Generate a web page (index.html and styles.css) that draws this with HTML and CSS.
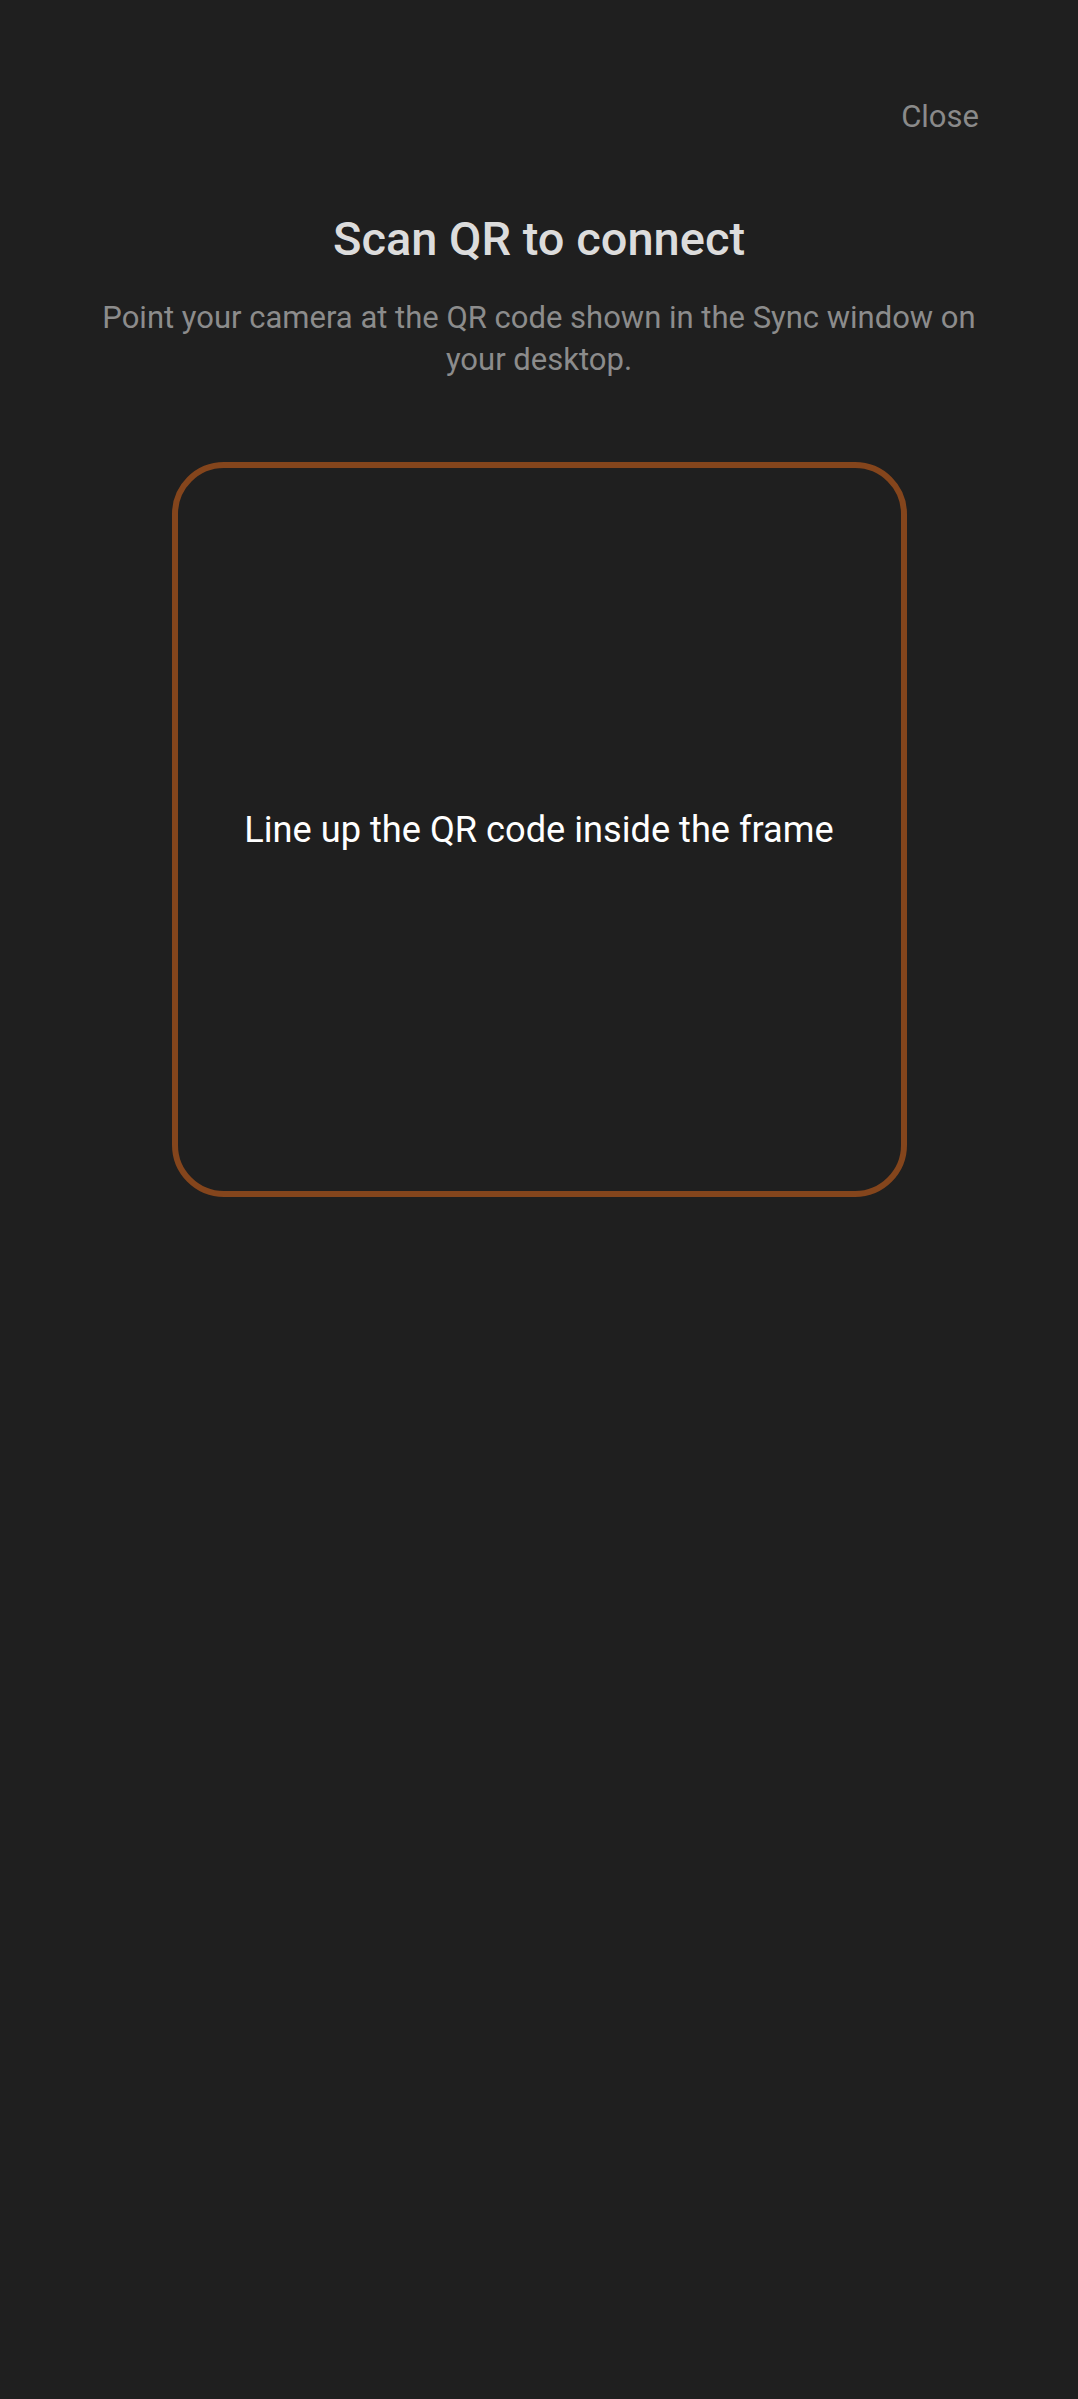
FILE: index.html
```html
<!DOCTYPE html>
<html lang="en">
<head>
<meta charset="utf-8">
<title>Scan QR to connect</title>
<link rel="stylesheet" href="styles.css">
</head>
<body>
<main class="screen">
  <header class="topbar">
    <button class="close-btn" type="button">Close</button>
  </header>
  <h1 class="title">Scan QR to connect</h1>
  <p class="subtitle">Point your camera at the QR code shown in the Sync window on your desktop.</p>
  <div class="frame">
    <span class="frame-hint">Line up the QR code inside the frame</span>
  </div>
</main>
</body>
</html>
```
FILE: styles.css
```css
html, body {
  margin: 0;
  padding: 0;
  background: #1f1f1f;
}
body {
  font-family: Roboto, "Noto Sans", "Liberation Sans", sans-serif;
  min-height: 2399px;
}
.screen {
  display: flex;
  flex-direction: column;
  align-items: center;
  padding: 97px 0 0;
}
.topbar {
  align-self: stretch;
  display: flex;
  justify-content: flex-end;
  padding: 0 99px;
}
.close-btn {
  background: none;
  border: 0;
  padding: 0;
  margin: 0;
  font-family: inherit;
  font-size: 31px;
  line-height: 40px;
  color: #8a8a8a;
}
.title {
  margin: 74px 0 0;
  font-size: 47px;
  line-height: 56px;
  font-weight: 500;
  color: #dcdcdc;
  text-align: center;
}
.subtitle {
  margin: 29.5px 0 0;
  padding: 0 84px;
  font-size: 31px;
  line-height: 42px;
  color: #8c8c8c;
  text-align: center;
}
.frame {
  margin-top: 81.5px;
  box-sizing: border-box;
  width: 735px;
  height: 735px;
  border: 6px solid #84451c;
  border-radius: 52px;
  display: flex;
  align-items: center;
  justify-content: center;
}
.frame-hint {
  font-size: 36.2px;
  line-height: 48px;
  color: #ffffff;
}
```
